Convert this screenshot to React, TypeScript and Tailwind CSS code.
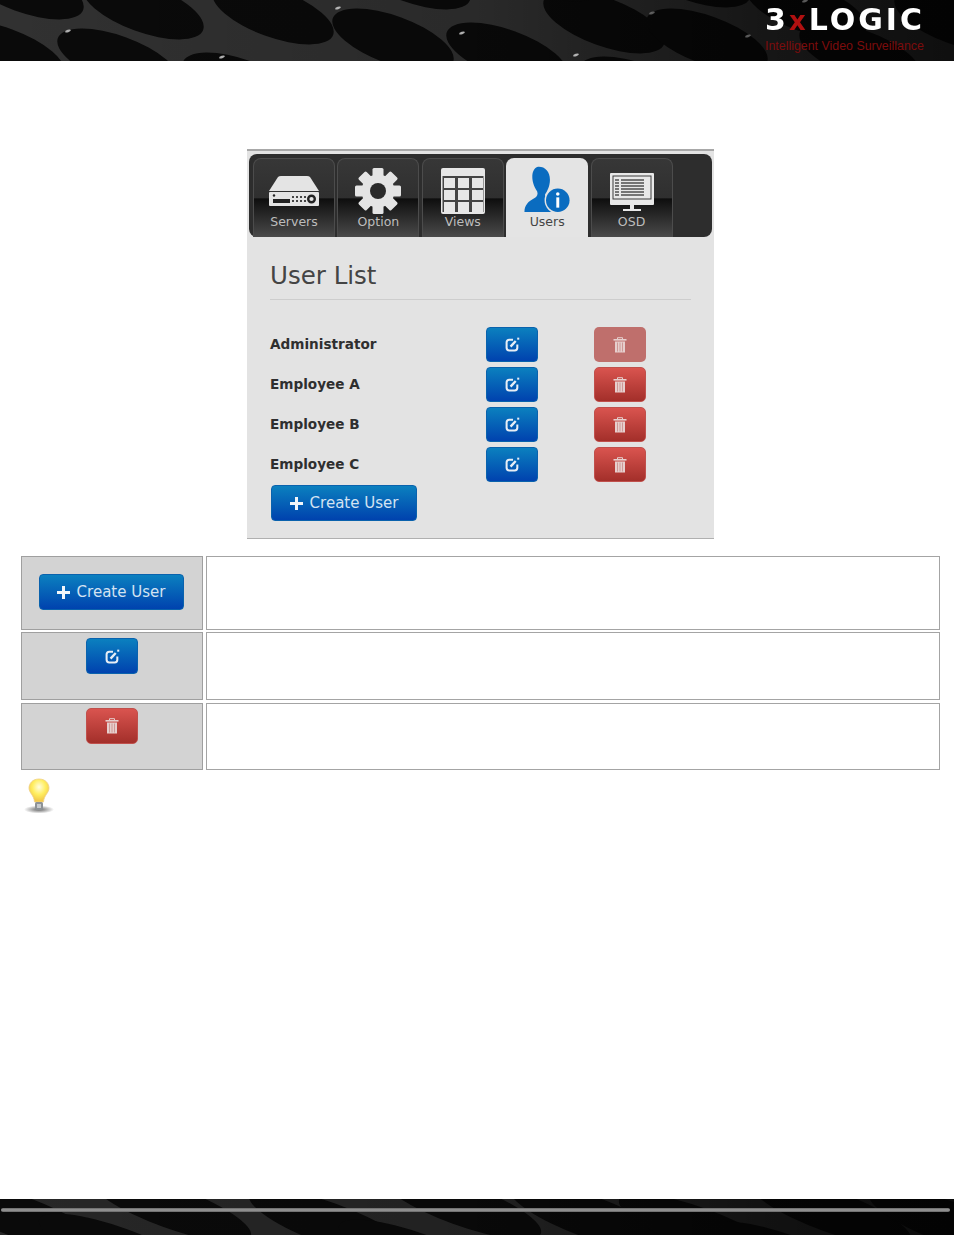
const BLUE_BTN = "flex items-center justify-center rounded-[4px] border border-[#0a62ad] bg-[linear-gradient(#0b80bf,#0042ae)] text-[#d3e3f2]";
const RED_BTN = "flex items-center justify-center rounded-[5px] border border-[#c0504c] bg-[linear-gradient(#d9544f,#a32f2a)]";
const SANS = "font-['DejaVu_Sans',Verdana,sans-serif]";

const USERS = ["Administrator", "Employee A", "Employee B", "Employee C"];

const HEADER_HOLES: [number, number][] = [
  [23, -12], [4, 52], [143, 8], [118, 60], [273, 13], [243, 84], [393, 40], [410, -22],
  [507, 54], [604, 22], [707, 40], [540, -30], [806, 8], [860, 54], [690, -24], [955, 20], [640, 88],
];
const FOOTER_HOLES: [number, number][] = [
  [20, 18], [170, 8], [330, 25], [460, 5], [590, 18], [700, 30], [830, 12], [950, 24], [120, 50], [420, 56], [790, 58],
];
const SPARKS: [number, number][] = [[68, 31], [338, 8], [222, 57], [462, 33], [652, 13], [748, 36], [576, 55], [805, 1]];

function Perforated({ id, height, holes, rx, ry, base, sparks }: {
  id: string;
  height: number;
  holes: [number, number][];
  rx: number;
  ry: number;
  base: string;
  sparks?: [number, number][];
}) {
  return (
    <svg width="954" height={height} viewBox={`0 0 954 ${height}`} className="block">
      <defs>
        <linearGradient id={id} x1="0" x2="1" y1="0" y2="0">
          <stop offset="0" stopColor="#000" stopOpacity="0" />
          <stop offset="0.5" stopColor="#000" stopOpacity="0.15" />
          <stop offset="0.8" stopColor="#000" stopOpacity="0.55" />
          <stop offset="1" stopColor="#000" stopOpacity="0.7" />
        </linearGradient>
      </defs>
      <rect width="954" height={height} fill={base} />
      {holes.map(([x, y]) => (
        <ellipse key={`${x}-${y}`} cx={x} cy={y} rx={rx} ry={ry} fill="#0a0a0a" transform={`rotate(20 ${x} ${y})`} />
      ))}
      <rect width="954" height={height} fill={`url(#${id})`} />
      {sparks?.map(([x, y]) => (
        <ellipse key={x} cx={x} cy={y} rx="3" ry="1.2" fill="#d8d8d8" opacity={x > 600 ? 0.4 : 0.8} transform={`rotate(-18 ${x} ${y})`} />
      ))}
    </svg>
  );
}

function ServerIcon() {
  return (
    <svg width="52" height="40" viewBox="0 0 52 40">
      <path d="M1 18 L10 4 Q11 3 13 3 H39 Q41 3 42 4 L51 18 Z" fill="#e4e4e4" />
      <rect x="1" y="19" width="50" height="14" rx="1" fill="#e4e4e4" />
      <rect x="5" y="26" width="17" height="4" fill="#222" />
      <circle cx="6" cy="22.5" r="1.2" fill="#222" />
      <g fill="#444">
        <rect x="24" y="23" width="2" height="2" /><rect x="28" y="23" width="2" height="2" /><rect x="32" y="23" width="2" height="2" />
        <rect x="24" y="27" width="2" height="2" /><rect x="28" y="27" width="2" height="2" /><rect x="32" y="27" width="2" height="2" />
        <rect x="36" y="23" width="2" height="2" /><rect x="36" y="27" width="2" height="2" />
      </g>
      <circle cx="43.5" cy="26" r="3.3" fill="none" stroke="#222" strokeWidth="2.4" />
    </svg>
  );
}

function GearIcon() {
  return (
    <svg width="48" height="48" viewBox="-24 -24 48 48">
      {[0, 45, 90, 135].map((a) => (
        <rect key={a} x="-5.5" y="-23" width="11" height="46" rx="1.5" fill="#e4e4e4" transform={`rotate(${a})`} />
      ))}
      <circle r="16.5" fill="#e4e4e4" />
      <circle r="8" fill="#2a2a2a" />
    </svg>
  );
}

function GridIcon() {
  return (
    <svg width="46" height="48" viewBox="0 0 46 48">
      <rect x="1" y="1" width="44" height="46" rx="2" fill="#e6e6e6" />
      <rect x="2.5" y="9" width="41" height="36" fill="#444" />
      <g fill="#e6e6e6">
        {[4, 18, 32].map((x) => [11, 23, 35].map((y) => <rect key={`${x}-${y}`} x={x} y={y} width="11" height="10" />))}
      </g>
    </svg>
  );
}

function UserInfoIcon() {
  return (
    <svg width="48" height="50" viewBox="0 0 48 50">
      <path d="M14 1 C21 0 27 5 27 14 C27 21 24 26 22 29 C22 33 26 35 30 37 L30 47 H1 C1 40 5 36 11 33 C14 31 15 29 14 26 C10 20 9 15 9 11 C9 6 11 2 14 1 Z" fill="#0a6cc0" />
      <circle cx="35" cy="35" r="13.5" fill="#e4e4e4" />
      <circle cx="35" cy="35" r="12" fill="#0a6cc0" />
      <circle cx="35" cy="28.5" r="1.8" fill="#fff" />
      <rect x="33.5" y="32" width="3" height="10.5" fill="#fff" />
    </svg>
  );
}

function MonitorIcon() {
  return (
    <svg width="46" height="40" viewBox="0 0 46 40">
      <rect x="1" y="1" width="44" height="32" rx="1" fill="#e8e8e8" />
      <rect x="3.5" y="3.5" width="39" height="24" fill="#3c3c3c" />
      <rect x="4.5" y="4.5" width="37" height="22" fill="#e8e8e8" />
      <g stroke="#444" strokeWidth="1.4">
        {[8, 11, 14, 17, 20, 23].map((y) => (
          <g key={y}>
            <line x1="6" x2="10" y1={y} y2={y} />
            <line x1="12" x2="35" y1={y} y2={y} />
          </g>
        ))}
      </g>
      <rect x="21" y="33" width="4" height="4" fill="#e8e8e8" />
      <rect x="14" y="37" width="18" height="2" fill="#e8e8e8" />
    </svg>
  );
}

function EditIcon() {
  return (
    <svg width="15" height="15" viewBox="0 0 14 14" fill="none">
      <path d="M7.5 2.5 H4 Q1.5 2.5 1.5 5 V10 Q1.5 12.5 4 12.5 H9 Q11.5 12.5 11.5 10 V7" stroke="#e8eef6" strokeWidth="1.9" />
      <path d="M5.2 9 L10 3.8" stroke="#e8eef6" strokeWidth="2.2" />
      <rect x="11.4" y="0.6" width="1.9" height="1.9" fill="#e8eef6" />
    </svg>
  );
}

function TrashIcon() {
  return (
    <svg width="14" height="16" viewBox="0 0 14 16">
      <path d="M4.5 2 V0.7 H9.5 V2" fill="none" stroke="#e6cfcd" strokeWidth="1" />
      <rect x="0.5" y="2" width="13" height="1.6" fill="#e6cfcd" />
      <path d="M2 4.5 H12 V15.5 H2 Z" fill="#e6cfcd" />
      <g stroke="#c98a86" strokeWidth="0.8">
        <line x1="4.5" x2="4.5" y1="5.5" y2="14.5" />
        <line x1="7" x2="7" y1="5.5" y2="14.5" />
        <line x1="9.5" x2="9.5" y1="5.5" y2="14.5" />
      </g>
    </svg>
  );
}

function PlusIcon() {
  return (
    <svg width="13" height="13" viewBox="0 0 13 13">
      <path d="M5 0 H8 V5 H13 V8 H8 V13 H5 V8 H0 V5 H5 Z" fill="#f2f6fa" />
    </svg>
  );
}

function Bulb() {
  return (
    <svg width="32" height="36" viewBox="0 0 32 36">
      <defs>
        <radialGradient id="glass" cx="0.5" cy="0.35" r="0.6">
          <stop offset="0" stopColor="#fffde0" />
          <stop offset="0.55" stopColor="#ffee60" />
          <stop offset="1" stopColor="#f2c84a" />
        </radialGradient>
        <radialGradient id="shade">
          <stop offset="0" stopColor="#666" />
          <stop offset="1" stopColor="#666" stopOpacity="0" />
        </radialGradient>
      </defs>
      <ellipse cx="16" cy="31.5" rx="15" ry="4" fill="url(#shade)" />
      <path d="M16 1 C23 1 26 6 26 10 C26 15 21 17 20.5 24 H11.5 C11 17 6 15 6 10 C6 6 9 1 16 1 Z" fill="url(#glass)" stroke="#efcf88" strokeWidth="0.8" />
      <rect x="12" y="24" width="8" height="8" rx="1.5" fill="#8d9296" />
      <rect x="14" y="26" width="4" height="4" fill="#c7cacc" />
    </svg>
  );
}

function CreateButton({ className }: { className: string }) {
  return (
    <div className={`${BLUE_BTN} gap-[7px] text-[15px] ${className}`}>
      <PlusIcon />
      <span>Create User</span>
    </div>
  );
}

const TABS = [
  { label: "Servers", icon: <ServerIcon />, pad: "pt-[14px]" },
  { label: "Option", icon: <GearIcon />, pad: "pt-[8px]" },
  { label: "Views", icon: <GridIcon />, pad: "pt-[8px]" },
  { label: "Users", icon: <UserInfoIcon />, pad: "pt-[8px]", active: true },
  { label: "OSD", icon: <MonitorIcon />, pad: "pt-[13px]" },
];

export default function App() {
  return (
    <div className={`flex min-h-[1235px] flex-col bg-white ${SANS}`}>
      <header className="relative h-[61px] overflow-hidden">
        <Perforated id="headerFade" height={61} holes={HEADER_HOLES} rx={64} ry={24} base="#313131" sparks={SPARKS} />
        <div className="absolute left-[765px] top-[1px] w-[170px]">
          <div className="whitespace-nowrap text-[30px] font-bold leading-[38px] tracking-[3px] text-white blur-[0.4px]">
            3<span className="text-[26px] text-[#b01010]">x</span>LOGIC
          </div>
          <div className="-mt-[1px] whitespace-nowrap font-['Liberation_Sans',Arial,sans-serif] text-[12.4px] leading-[14px] text-[#7c0c0c]">
            Intelligent Video Surveillance
          </div>
        </div>
      </header>

      <main className="flex-1 pt-[88px]">
        <section className="ml-[247px] w-[467px] border-b border-t-2 border-b-[#b0b0b0] border-t-[#a8a8a8] bg-[#e3e3e3] px-[2px] pb-[17px] pt-[3px]">
          <nav className="flex h-[83px] items-end gap-[2.4px] rounded-[8px] bg-[#2d2d2d] pl-[4px] pt-[4px]">
            {TABS.map((tab) => (
              <div
                key={tab.label}
                className={`flex h-[79px] w-[82px] flex-col items-center rounded-t-[8px] ${tab.pad} ${
                  tab.active
                    ? "bg-[#e4e4e4] text-[#444]"
                    : "border border-b-0 border-[#4c4c4c] bg-[linear-gradient(#373737_0%,#2f2f2f_50%,#0e0e0e_51%,#4a4a4a_100%)] text-[#bdbdbd]"
                }`}
              >
                {tab.icon}
                <span className="mt-auto pb-[8px] text-[12.5px] leading-[14px]">{tab.label}</span>
              </div>
            ))}
          </nav>

          <div className="mx-[21px]">
            <h1 className="flex h-[63px] items-center border-b border-[#cdcdcd] pt-[17px] text-[24.5px] font-normal leading-none text-[#444]">
              User List
            </h1>
            <div className="mt-[27px] grid grid-cols-[216px_108px_52px] gap-y-[5px]">
              {USERS.map((name, i) => (
                <div key={name} className="contents">
                  <span className="flex h-[35px] items-center text-[13.6px] font-bold text-[#2f2f2f]">{name}</span>
                  <div className={`${BLUE_BTN} h-[35px] w-[52px]`}>
                    <EditIcon />
                  </div>
                  <div className={i === 0 ? "flex h-[35px] w-[52px] items-center justify-center rounded-[5px] bg-[#bf6f6c]" : `${RED_BTN} h-[35px] w-[52px]`}>
                    <TrashIcon />
                  </div>
                </div>
              ))}
            </div>
            <CreateButton className="ml-[1px] mt-[3px] h-[36px] w-[146px]" />
          </div>
        </section>

        <div className="ml-[21px] mt-[17px] w-[919px]">
          <div className="grid h-[74px] grid-cols-[182px_734px] gap-x-[3px]">
            <div className="flex items-center justify-center border border-[#9f9f9f] bg-[#d3d3d3] pb-[2px] pr-[2px]">
              <CreateButton className="h-[36px] w-[145px]" />
            </div>
            <div className="border border-[#a4a4a4] bg-white" />
          </div>
          <div className="mt-[2px] grid h-[68px] grid-cols-[182px_734px] gap-x-[3px]">
            <div className="flex justify-center border border-[#9f9f9f] bg-[#d3d3d3] pt-[5px]">
              <div className={`${BLUE_BTN} h-[36px] w-[52px]`}>
                <EditIcon />
              </div>
            </div>
            <div className="border border-[#a4a4a4] bg-white" />
          </div>
          <div className="mt-[3px] grid h-[67px] grid-cols-[182px_734px] gap-x-[3px]">
            <div className="flex justify-center border border-[#9f9f9f] bg-[#d3d3d3] pt-[4px]">
              <div className={`${RED_BTN} h-[36px] w-[52px]`}>
                <TrashIcon />
              </div>
            </div>
            <div className="border border-[#a4a4a4] bg-white" />
          </div>
        </div>

        <div className="ml-[23px] mt-[8px]">
          <Bulb />
        </div>
      </main>

      <footer className="relative h-[36px] overflow-hidden">
        <Perforated id="footerFade" height={36} holes={FOOTER_HOLES} rx={86} ry={21} base="#272727" />
        <div className="absolute left-[1px] right-[4px] top-[9px] h-[4px] rounded-full bg-[linear-gradient(#666,#9c9c9c,#666)]" />
      </footer>
    </div>
  );
}
